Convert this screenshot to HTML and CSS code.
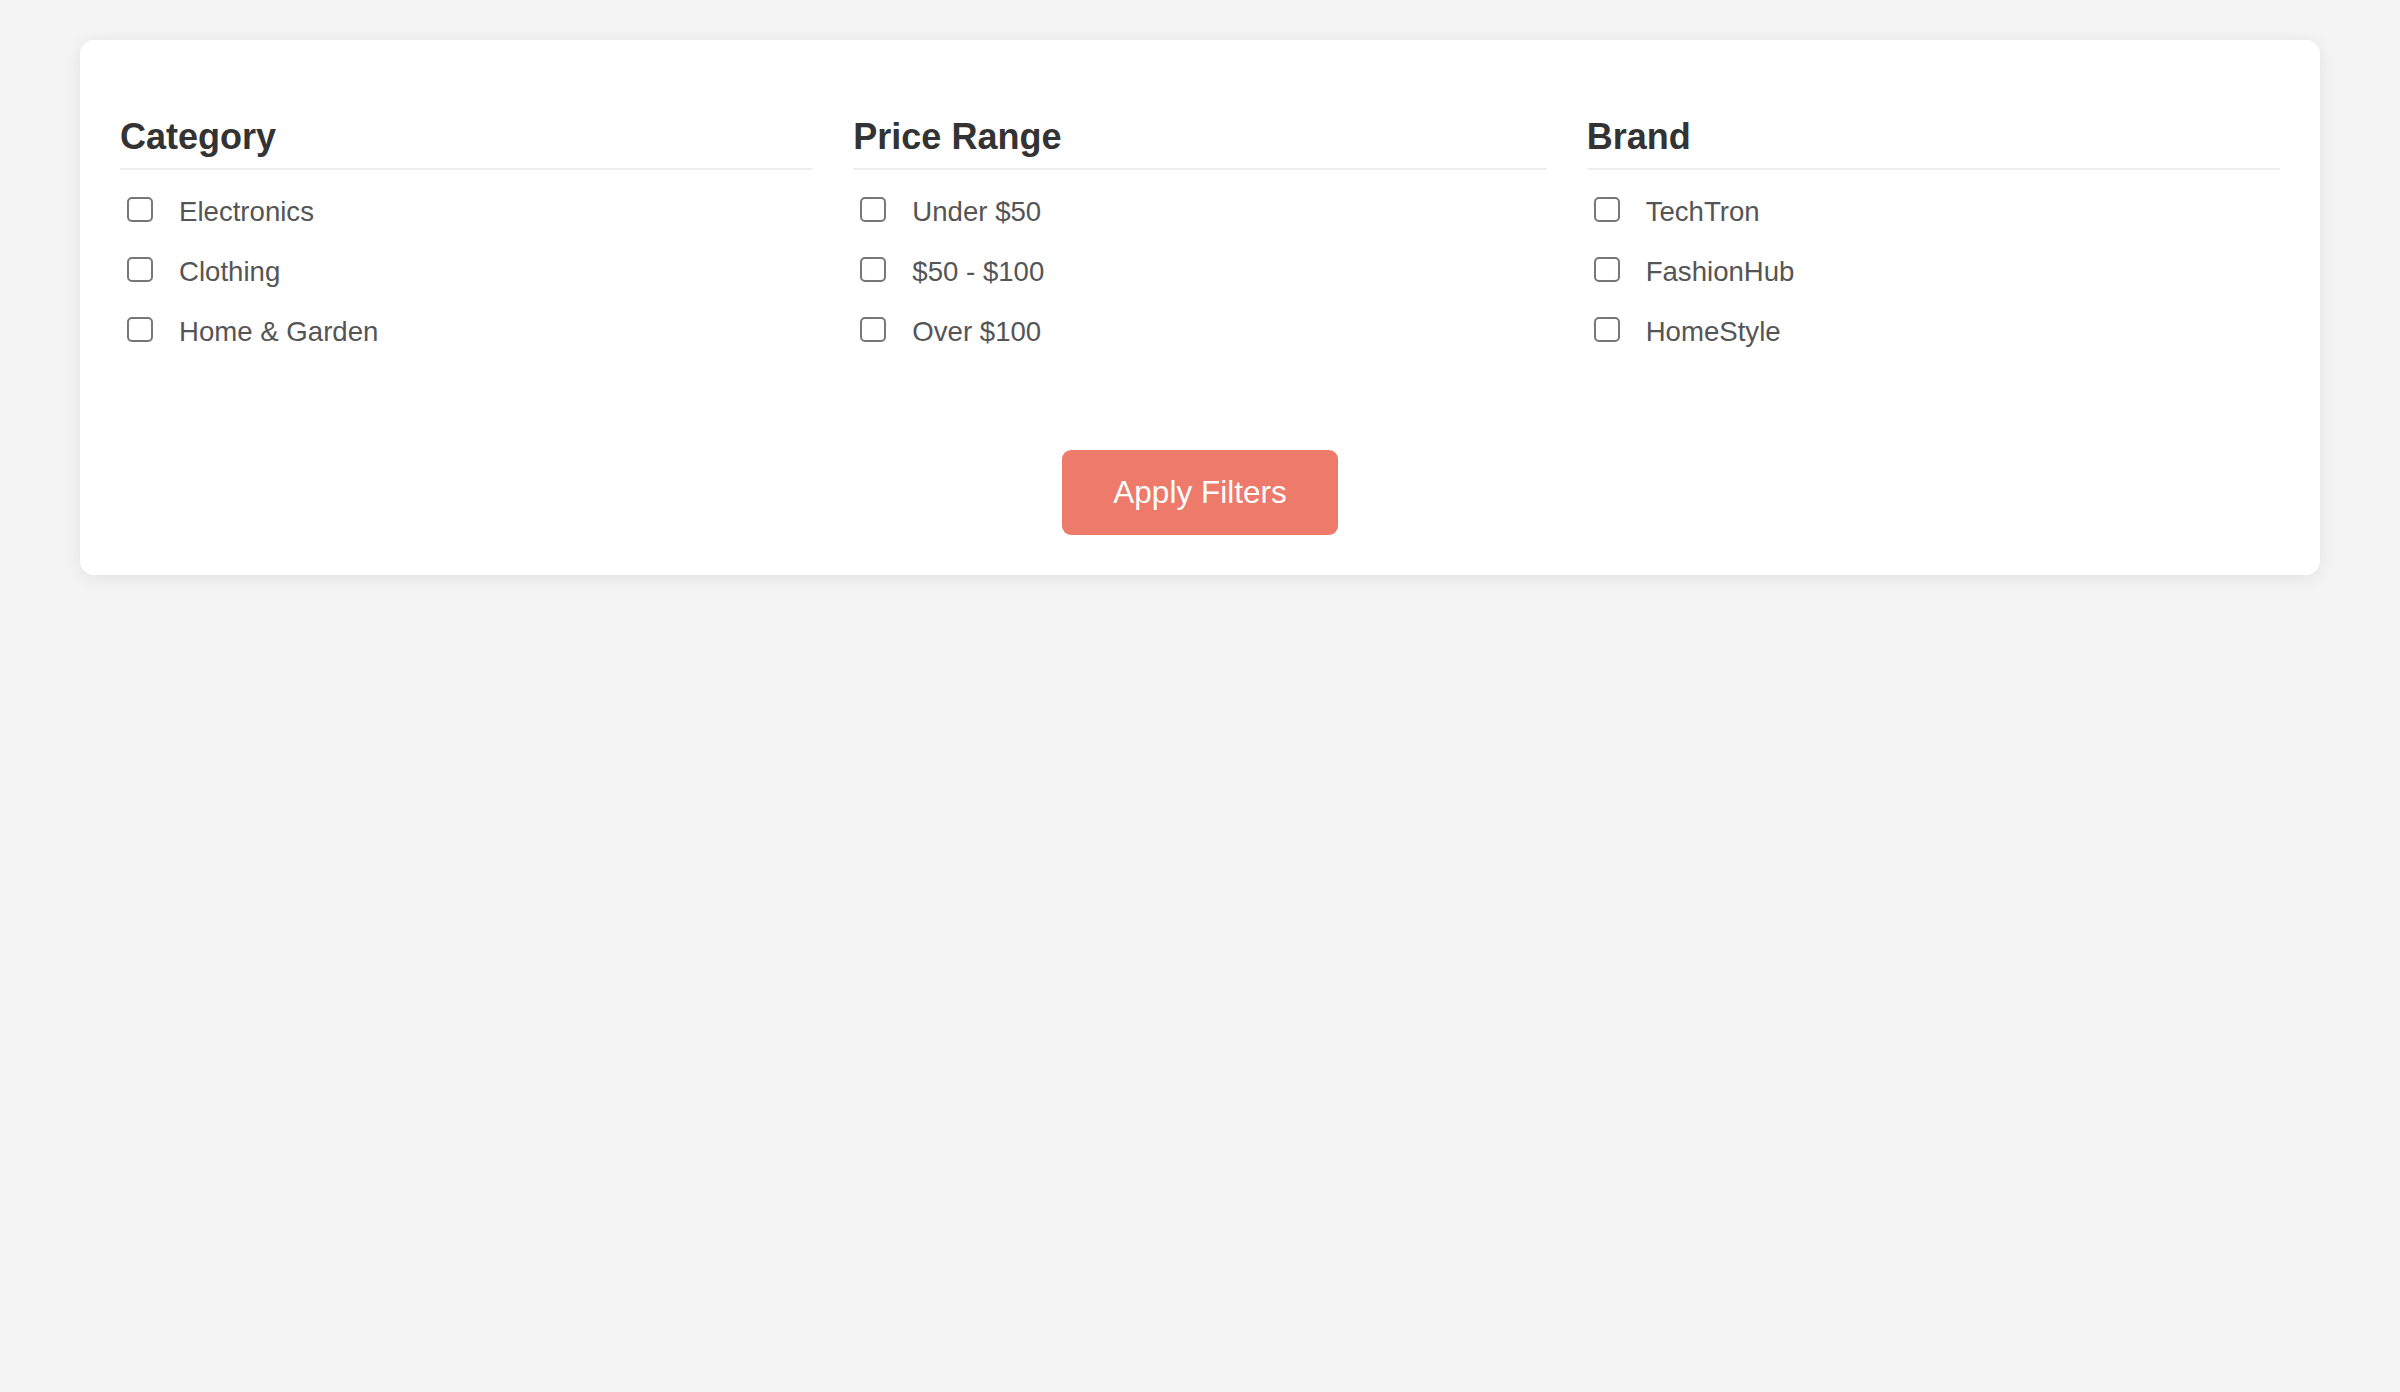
FILE: index.html
```html
<!DOCTYPE html>
<html lang="en">
<head>
<meta charset="utf-8">
<title>Filters</title>
<link rel="stylesheet" href="styles.css">
</head>
<body>
  <div class="card">
    <div class="filters">
      <section class="group">
        <h3 class="group-title">Category</h3>
        <label class="option"><input type="checkbox" class="check"><span>Electronics</span></label>
        <label class="option"><input type="checkbox" class="check"><span>Clothing</span></label>
        <label class="option"><input type="checkbox" class="check"><span>Home &amp; Garden</span></label>
      </section>
      <section class="group">
        <h3 class="group-title">Price Range</h3>
        <label class="option"><input type="checkbox" class="check"><span>Under $50</span></label>
        <label class="option"><input type="checkbox" class="check"><span>$50 - $100</span></label>
        <label class="option"><input type="checkbox" class="check"><span>Over $100</span></label>
      </section>
      <section class="group">
        <h3 class="group-title">Brand</h3>
        <label class="option"><input type="checkbox" class="check"><span>TechTron</span></label>
        <label class="option"><input type="checkbox" class="check"><span>FashionHub</span></label>
        <label class="option"><input type="checkbox" class="check"><span>HomeStyle</span></label>
      </section>
    </div>
    <div class="actions">
      <button class="apply" type="button">Apply Filters</button>
    </div>
  </div>
</body>
</html>
```

FILE: styles.css
```css
html, body {
  margin: 0;
  padding: 0;
}

body {
  background: #f4f4f4;
  font-family: "Liberation Sans", Arial, Helvetica, sans-serif;
  padding: 40px 80px;
  min-height: 100vh;
  box-sizing: border-box;
}

.card {
  background: #ffffff;
  border-radius: 14px;
  padding: 40px;
  box-shadow: 0 3px 18px rgba(0, 0, 0, 0.08);
}

.filters {
  display: grid;
  grid-template-columns: repeat(3, 1fr);
  column-gap: 40px;
}

.group {
  display: flex;
  flex-direction: column;
}

.group-title {
  font-size: 36px;
  line-height: 42px;
  font-weight: 700;
  color: #333333;
  margin: 36px 0 12px 0;
  padding-bottom: 10px;
  border-bottom: 2px solid #eeeeee;
}

.option {
  display: flex;
  align-items: center;
  height: 60px;
  font-size: 27.6px;
  color: #555555;
  cursor: pointer;
}

.check {
  appearance: none;
  -webkit-appearance: none;
  width: 26px;
  height: 25px;
  margin: 0 26px 5px 7px;
  border: 2px solid #777777;
  border-radius: 5px;
  background: #ffffff;
  box-sizing: border-box;
  flex: none;
}

.actions {
  display: flex;
  justify-content: center;
  margin-top: 88px;
}

.apply {
  font-family: "Liberation Sans", Arial, Helvetica, sans-serif;
  font-size: 31.5px;
  line-height: 37px;
  color: #ffffff;
  background: #ed7a6a;
  border: none;
  border-radius: 9px;
  padding: 24px 51px;
  cursor: pointer;
}
```
